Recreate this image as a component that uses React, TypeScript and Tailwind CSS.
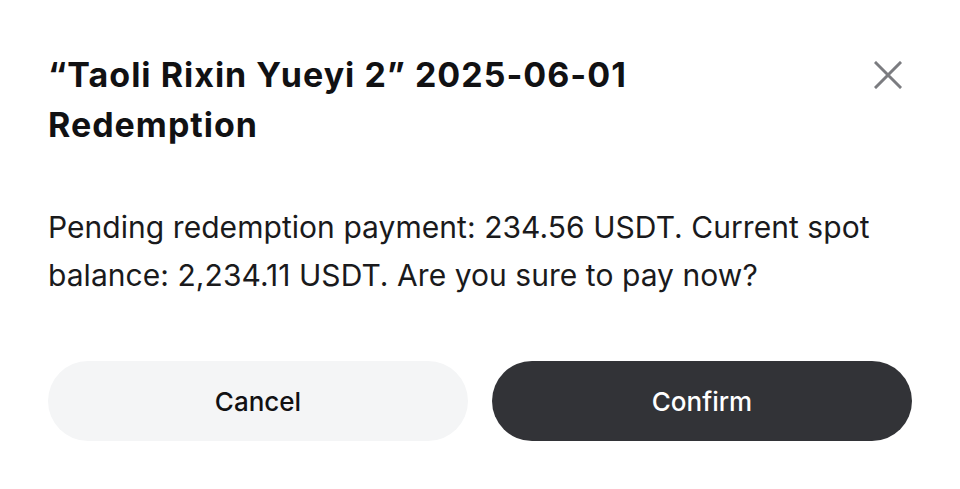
export default function App() {
  return (
    <div className="w-[960px] h-[489px] bg-white px-12 pt-[50px] font-['Inter',sans-serif] text-[#111113]">
      <div className="flex items-start justify-between">
        <h2 className="text-[34px] leading-[50px] font-bold tracking-[1px] w-[640px]">
          “Taoli Rixin Yueyi 2” 2025-06-01 Redemption
        </h2>
        <button className="mt-[11px] mr-[10px] text-[#7b7c80]">
          <svg width="28" height="28" viewBox="0 0 28 28" fill="none" stroke="currentColor" strokeWidth="3" strokeLinecap="square">
            <path d="M2 2L26 26M26 2L2 26" />
          </svg>
        </button>
      </div>
      <p className="mt-[53px] text-[30px] leading-[48px] tracking-[0.05px] text-[#1a1a1c]">
        Pending redemption payment: 234.56 USDT. Current spot balance: 2,234.11 USDT. Are you sure to pay now?
      </p>
      <div className="mt-[62px] flex gap-6">
        <button className="flex-1 h-20 rounded-full bg-[#f4f5f6] text-[26px] font-medium text-[#111113]">Cancel</button>
        <button className="flex-1 h-20 rounded-full bg-[#323337] text-[26px] font-medium text-white">Confirm</button>
      </div>
    </div>
  );
}
